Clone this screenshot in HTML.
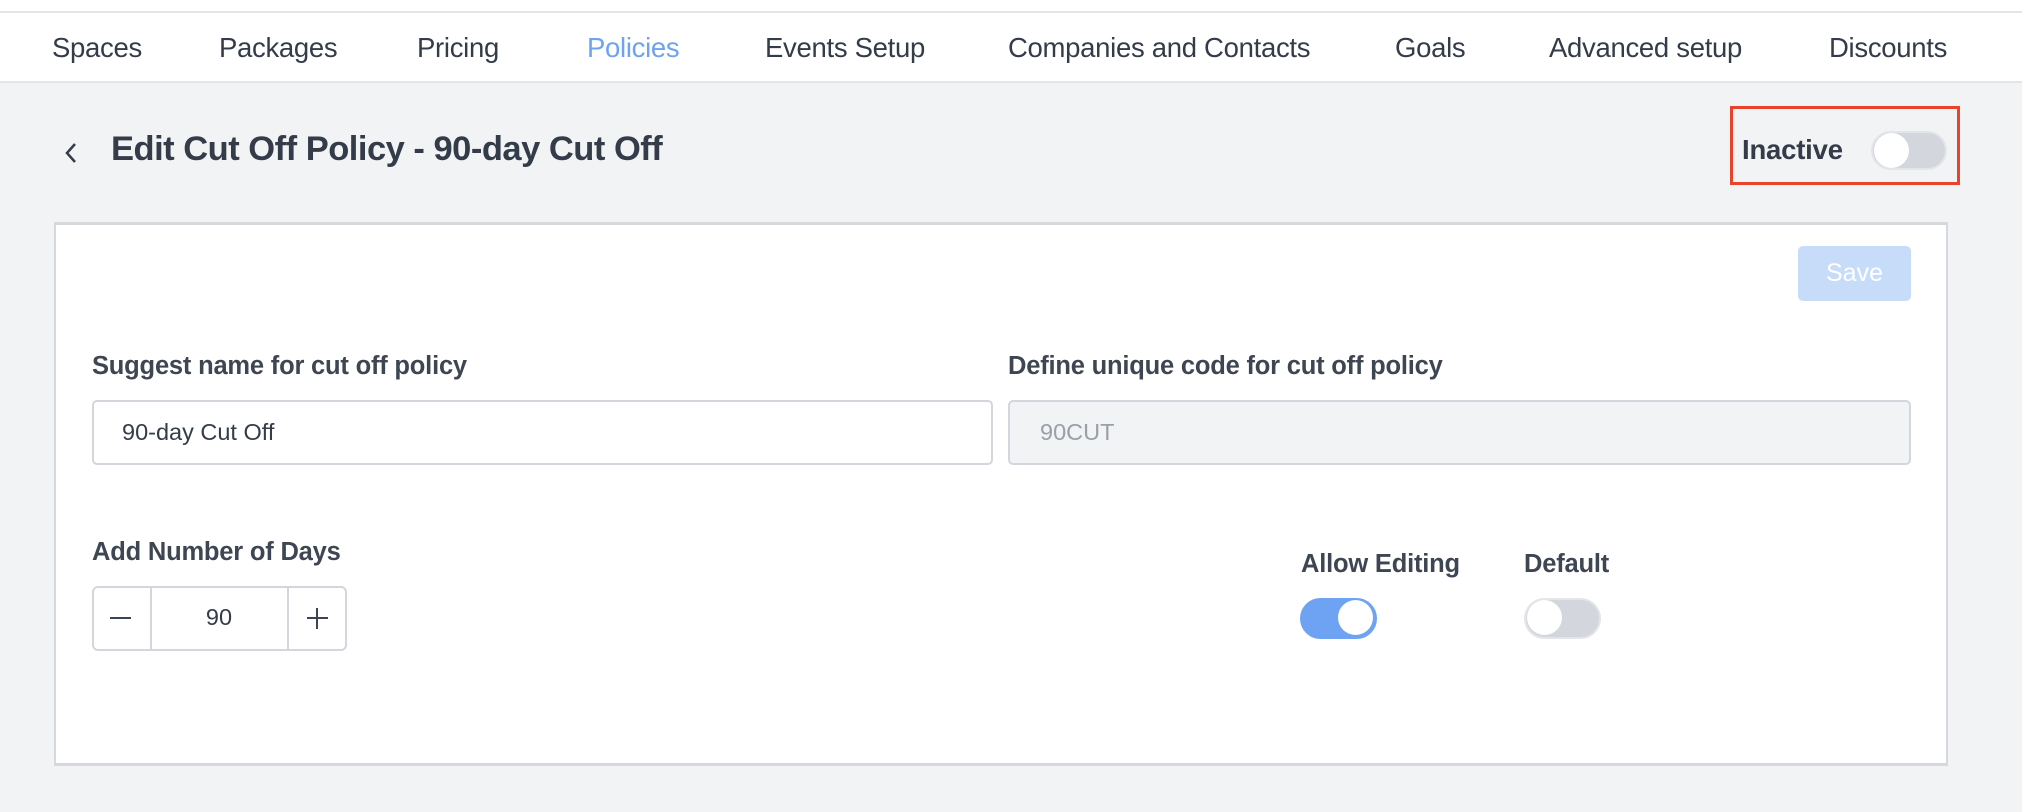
<!DOCTYPE html>
<html><head><meta charset="utf-8"><style>
*{box-sizing:border-box;margin:0;padding:0}
body{width:2022px;height:812px;background:#f2f3f5;font-family:"Liberation Sans",sans-serif;color:#3b4452;position:relative;overflow:hidden}
.a{position:absolute;white-space:nowrap}
.nav{position:absolute;left:0;top:11px;width:2022px;height:72px;background:#fff;border-top:2px solid #e3e5e8;border-bottom:2px solid #e3e5e8}
.nav span{position:absolute;top:19px;font-size:27.5px;color:#343c4a;letter-spacing:-0.3px}
.lbl{font-size:25.5px;font-weight:bold;color:#3f4653;letter-spacing:-0.2px}
.tg{position:absolute;width:77px;height:41px;border-radius:21px;background:#d3d6dc;border:2px solid #e3e5e8}
.tg i{position:absolute;top:1px;width:35px;height:35px;border-radius:50%;background:#fff}
</style></head><body>
<div class="a" style="left:0;top:0;width:2022px;height:12px;background:#fff"></div>
<div class="nav">
<span style="left:52px">Spaces</span>
<span style="left:219px">Packages</span>
<span style="left:417px">Pricing</span>
<span style="left:587px;color:#6ea3f0">Policies</span>
<span style="left:765px">Events Setup</span>
<span style="left:1008px">Companies and Contacts</span>
<span style="left:1395px">Goals</span>
<span style="left:1549px">Advanced setup</span>
<span style="left:1829px">Discounts</span>
</div>
<svg class="a" style="left:62px;top:141px" width="18" height="24"><path d="M13 3 L5 12 L13 21" stroke="#343c4a" stroke-width="2.5" fill="none"/></svg>
<div class="a" style="left:111px;top:130px;font-size:34.5px;font-weight:bold;color:#343c4a;letter-spacing:-0.5px">Edit Cut Off Policy - 90-day Cut Off</div>
<div class="a" style="left:1730px;top:106px;width:230px;height:79px;border:3px solid #e8432d"></div>
<div class="a lbl" style="left:1742px;top:134px;font-size:27.5px;color:#343c4a">Inactive</div>
<div class="tg" style="left:1871px;top:131px;width:76px;height:39px"><i style="left:1px;top:0px"></i></div>
<div class="a" style="left:54px;top:222px;width:1894px;height:544px;background:#fff;border:2px solid #d5d8dd;border-top-width:3px;border-bottom-width:3px"></div>
<div class="a" style="left:1798px;top:246px;width:113px;height:55px;background:#c7dcf9;border-radius:5px;color:#fff;font-size:25px;text-align:center;line-height:55px">Save</div>
<div class="a lbl" style="left:92px;top:352px">Suggest name for cut off policy</div>
<div class="a lbl" style="left:1008px;top:352px">Define unique code for cut off policy</div>
<div class="a" style="left:92px;top:400px;width:901px;height:65px;background:#fff;border:2px solid #d3d6dc;border-radius:5px;font-size:23.5px;line-height:61px;padding-left:28px;color:#343c4a">90-day Cut Off</div>
<div class="a" style="left:1008px;top:400px;width:903px;height:65px;background:#f2f3f5;border:2px solid #d3d6dc;border-radius:5px;font-size:23.5px;line-height:61px;padding-left:30px;color:#9aa0a8">90CUT</div>
<div class="a lbl" style="left:92px;top:538px">Add Number of Days</div>
<div class="a" style="left:92px;top:586px;width:255px;height:65px;border:2px solid #d3d6dc;border-radius:6px;background:#fff"></div>
<div class="a" style="left:150px;top:588px;width:2px;height:61px;background:#d3d6dc"></div>
<div class="a" style="left:287px;top:588px;width:2px;height:61px;background:#d3d6dc"></div>
<div class="a" style="left:110px;top:617px;width:21px;height:2px;background:#3b4452"></div>
<div class="a" style="left:307px;top:617px;width:21px;height:2px;background:#3b4452"></div>
<div class="a" style="left:316px;top:608px;width:2px;height:21px;background:#3b4452"></div>
<div class="a" style="left:150px;top:604px;width:138px;text-align:center;font-size:23.5px;color:#343c4a">90</div>
<div class="a lbl" style="left:1301px;top:550px">Allow Editing</div>
<div class="a lbl" style="left:1524px;top:550px">Default</div>
<div class="tg" style="left:1300px;top:598px;background:#6ea3f3;border-color:#6ea3f3"><i style="left:36px;top:0px;border:0"></i></div>
<div class="tg" style="left:1524px;top:598px"><i style="left:1px;top:0px"></i></div>
</body></html>
